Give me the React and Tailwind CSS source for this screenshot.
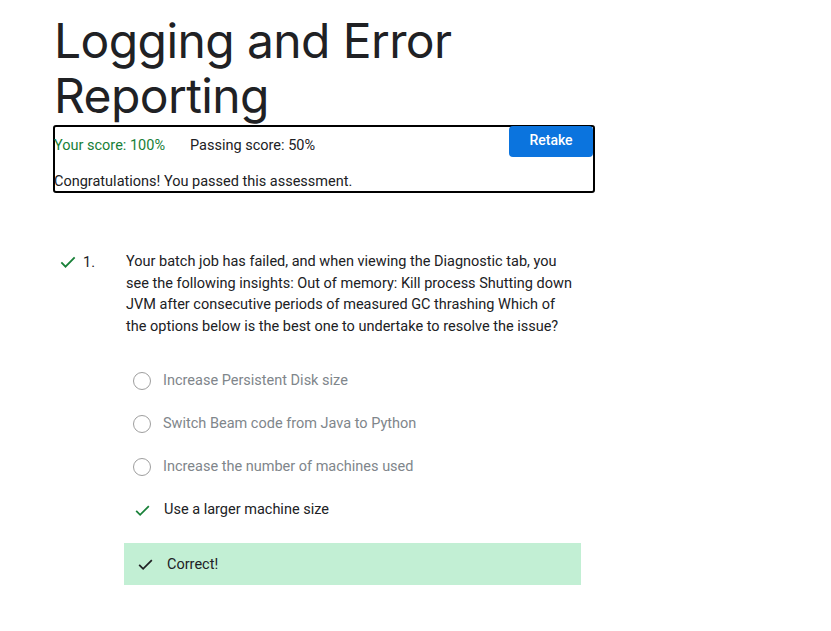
const options = [
  { text: "Increase Persistent Disk size", picked: false },
  { text: "Switch Beam code from Java to Python", picked: false },
  { text: "Increase the number of machines used", picked: false },
  { text: "Use a larger machine size", picked: true },
];

function CheckMark({ className }) {
  return (
    <svg viewBox="0 0 24 24" className={className} fill="none" stroke="currentColor" strokeWidth="2.2">
      <path d="M4 12.5l5 5L20 6.5" />
    </svg>
  );
}

export default function App() {
  return (
    <div className="min-h-[631px] bg-white font-['Roboto',sans-serif] text-[14.5px] text-[#202124]">
      <div className="pl-[53px] pt-[13px] w-[595px]">
        <h1 className="pl-[1px] font-['Inter',sans-serif] text-[48px] leading-[55px] tracking-[-0.6px] text-[#202124]">
          Logging and Error Reporting
        </h1>
        <div className="mt-[2px] h-[68px] w-[542px] rounded-[3px] border-2 border-black flex justify-between">
          <div className="flex flex-col -ml-[1px]">
            <div className="flex pt-[9px] leading-[20px]">
              <span className="text-[#188038]">Your score: 100%</span>
              <span className="ml-[25px]">Passing score: 50%</span>
            </div>
            <div className="mt-[16px] leading-[20px]">Congratulations! You passed this assessment.</div>
          </div>
          <button className="h-[31px] w-[84px] -mt-[1px] rounded-[4px] bg-[#0b74de] text-white text-[14px] font-medium pb-[3px]">
            Retake
          </button>
        </div>
      </div>

      <div className="mt-[58px] pl-[58px] flex">
        <div className="flex w-[68px] pt-[1px]">
          <CheckMark className="w-[20px] h-[20px] text-[#188038]" />
          <span className="ml-[5px] leading-[21px]">1.</span>
        </div>
        <div className="w-[457px]">
          <p className="w-[450px] leading-[21.5px]">
            Your batch job has failed, and when viewing the Diagnostic tab, you see the following insights: Out of memory: Kill process Shutting down JVM after consecutive periods of measured GC thrashing Which of the options below is the best one to undertake to resolve the issue?
          </p>
          <div className="mt-[34px] flex flex-col gap-[23px] pl-[7px]">
            {options.map((o) => (
              <div key={o.text} className="flex items-center h-[20px]">
                {o.picked ? (
                  <CheckMark className="w-[19px] h-[19px] text-[#188038]" />
                ) : (
                  <span className="w-[18px] h-[18px] rounded-full border-[1.5px] border-[#9e9e9e]" />
                )}
                <span className={"ml-[12px] " + (o.picked ? "text-[#202124]" : "text-[#80868b]")}>
                  {o.text}
                </span>
              </div>
            ))}
          </div>
          <div className="mt-[23px] -ml-[2px] h-[42px] w-[457px] bg-[#c2efd4] flex items-center pl-[12px] pt-[1px]">
            <CheckMark className="w-[19px] h-[19px] text-[#202124]" />
            <span className="ml-[12px]">Correct!</span>
          </div>
        </div>
      </div>
    </div>
  );
}
